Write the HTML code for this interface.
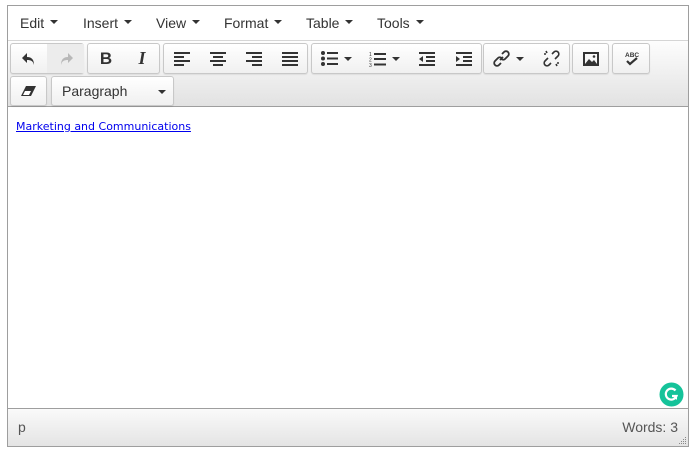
<!DOCTYPE html>
<html><head><style>
*{box-sizing:border-box;margin:0;padding:0}
body{width:695px;height:453px;background:#fff;font-family:"Liberation Sans",Arial,sans-serif;position:relative;overflow:hidden}
.ed{position:absolute;left:7px;top:5px;width:682px;height:442px;border:1px solid #9e9e9e;background:#fff}
.menu{position:absolute;left:0;top:0;width:680px;height:35px;background:#fff;border-bottom:1px solid #d5d5d5}
.mi{position:absolute;top:9px;font-size:14px;color:#333}
.mi:after{content:"";display:inline-block;margin-left:6px;vertical-align:middle;border-left:4px solid transparent;border-right:4px solid transparent;border-top:4px solid #333;position:relative;top:-2px}
.tb{position:absolute;left:0;top:35px;width:680px;height:66px;background:linear-gradient(#fdfdfd,#e2e2e2);border-bottom:1px solid #9e9e9e}
.g{position:absolute;border:1px solid #c8c8c8;border-radius:3px;background:linear-gradient(#fff,#f0f0f0);box-shadow:0 1px 1px rgba(0,0,0,.08)}
.b{position:absolute;top:0;height:100%;display:flex;align-items:center;justify-content:center}
.b+.b{}
.dd{display:inline-block;border-left:4px solid transparent;border-right:4px solid transparent;border-top:4px solid #333;margin-left:6px}
.body{position:absolute;left:0;top:102px;width:680px;height:300px}
.body a{position:absolute;left:8px;top:12px;font-family:"DejaVu Sans",sans-serif;font-size:11px;color:#1a0dab;color:#00e;text-decoration:underline}
.sb{position:absolute;left:0;top:402px;width:680px;height:38px;border-top:1px solid #9e9e9e;background:linear-gradient(#fafafa,#e4e4e4);font-size:14px;color:#555}
</style></head><body>
<div class="ed">
 <div class="menu">
  <span class="mi" style="left:12px">Edit</span>
  <span class="mi" style="left:75px">Insert</span>
  <span class="mi" style="left:148px">View</span>
  <span class="mi" style="left:216px">Format</span>
  <span class="mi" style="left:298px">Table</span>
  <span class="mi" style="left:369px">Tools</span>
 </div>
 <div class="tb">
  <!-- group1 -->
  <div class="g" style="left:2px;top:2px;width:74px;height:31px">
   <div class="b" style="left:0;width:36px"><svg width="16" height="16" viewBox="0 0 16 16"><path d="M6 2L1 7l5 5V9c4 0 6 1 7 5 0-5-2-8-7-8V2z" fill="#333"/></svg></div>
   <div class="b" style="left:36px;width:37px;background:#ececec"><svg width="16" height="16" viewBox="0 0 16 16"><path d="M10 2l5 5-5 5V9c-4 0-6 1-7 5 0-5 2-8 7-8V2z" fill="#b8b8b8"/></svg></div>
  </div>
  <div class="g" style="left:79px;top:2px;width:73px;height:31px">
   <div class="b" style="left:0;width:36px;font-weight:bold;font-size:17px;color:#333">B</div>
   <div class="b" style="left:36px;width:36px;font-family:'Liberation Serif',serif;font-style:italic;font-weight:bold;font-size:18px;color:#333">I</div>
  </div>
  <div class="g" style="left:155px;top:2px;width:145px;height:31px">
   <div class="b" style="left:0;width:36px"><svg width="16" height="14"><path d="M0 1h16M0 5h10M0 9h16M0 13h10" stroke="#333" stroke-width="2"/></svg></div>
   <div class="b" style="left:36px;width:36px"><svg width="16" height="14"><path d="M0 1h16M3 5h10M0 9h16M3 13h10" stroke="#333" stroke-width="2"/></svg></div>
   <div class="b" style="left:72px;width:36px"><svg width="16" height="14"><path d="M0 1h16M6 5h10M0 9h16M6 13h10" stroke="#333" stroke-width="2"/></svg></div>
   <div class="b" style="left:108px;width:36px"><svg width="16" height="14"><path d="M0 1h16M0 5h16M0 9h16M0 13h16" stroke="#333" stroke-width="2"/></svg></div>
  </div>
  <div class="g" style="left:303px;top:2px;width:171px;height:31px">
   <div class="b" style="left:0;width:48px"><svg width="17" height="15"><circle cx="2" cy="2" r="2" fill="#333"/><circle cx="2" cy="7.5" r="2" fill="#333"/><circle cx="2" cy="13" r="2" fill="#333"/><path d="M6 2h11M6 7.5h11M6 13h11" stroke="#333" stroke-width="2"/></svg><span class="dd"></span></div>
   <div class="b" style="left:48px;width:48px"><svg width="17" height="16"><text x="0" y="5" font-size="5" fill="#333" font-family="Liberation Sans">1</text><text x="0" y="10.5" font-size="5" fill="#333" font-family="Liberation Sans">2</text><text x="0" y="16" font-size="5" fill="#333" font-family="Liberation Sans">3</text><path d="M5 3h12M5 8h12M5 13.5h12" stroke="#333" stroke-width="2"/></svg><span class="dd"></span></div>
   <div class="b" style="left:96px;width:37px"><svg width="16" height="14"><path d="M0 1h16M7 5h9M7 9h9M0 13h16" stroke="#333" stroke-width="2"/><path d="M0 7l4-3v6z" fill="#333"/></svg></div>
   <div class="b" style="left:133px;width:37px"><svg width="16" height="14"><path d="M0 1h16M7 5h9M7 9h9M0 13h16" stroke="#333" stroke-width="2"/><path d="M4 7L0 4v6z" fill="#333"/></svg></div>
  </div>
  <div class="g" style="left:475px;top:2px;width:87px;height:31px">
   <div class="b" style="left:0;width:48px"><svg width="17" height="17" viewBox="0 0 17 17"><path d="M7 10l3-3M9 4l2-2a2.5 2.5 0 014 4l-3 3a2.5 2.5 0 01-3.5 0M8 13l-2 2a2.5 2.5 0 01-4-4l3-3a2.5 2.5 0 013.5 0" stroke="#333" stroke-width="1.8" fill="none"/></svg><span class="dd"></span></div>
   <div class="b" style="left:48px;width:38px"><svg width="17" height="17" viewBox="0 0 17 17"><path d="M9 4l2-2a2.5 2.5 0 014 4l-3 3M8 13l-2 2a2.5 2.5 0 01-4-4l3-3M3 1l1 2M1 4h2M14 16l-1-2M16 13h-2" stroke="#333" stroke-width="1.6" fill="none"/></svg></div>
  </div>
  <div class="g" style="left:564px;top:2px;width:37px;height:31px">
   <div class="b" style="left:0;width:36px"><svg width="16" height="14"><rect x="1" y="1" width="14" height="12" fill="none" stroke="#333" stroke-width="2"/><path d="M2 12l4-5 3 3 2-2 3 4z" fill="#333"/><circle cx="11" cy="4.5" r="1.3" fill="#333"/></svg></div>
  </div>
  <div class="g" style="left:604px;top:2px;width:38px;height:31px">
   <div class="b" style="left:0;width:37px"><svg width="16" height="16"><text x="1" y="6" font-size="6.5" font-weight="bold" fill="#333" font-family="Liberation Sans">ABC</text><path d="M3 10l3 3 7-6" stroke="#333" stroke-width="2.2" fill="none"/></svg></div>
  </div>
  <!-- row2 -->
  <div class="g" style="left:2px;top:35px;width:37px;height:30px">
   <div class="b" style="left:0;width:36px"><svg width="16" height="12"><path d="M5 1h10L10 11H0z" fill="#333"/><path d="M4 6h6l-2 4H2z" fill="#fff"/></svg></div>
  </div>
  <div class="g" style="left:43px;top:35px;width:123px;height:30px">
   <div class="b" style="left:10px;width:100px;justify-content:flex-start;font-size:14px;color:#333">Paragraph</div>
   <span class="dd" style="position:absolute;left:100px;top:13px"></span>
  </div>
 </div>
 <div class="body"><a>Marketing and Communications</a>
  <svg style="position:absolute;left:651px;top:274px" width="25" height="25"><circle cx="12.5" cy="12.5" r="12" fill="#15c39a"/><path d="M16.5 8.5A5.5 5.5 0 1 0 17.5 14H13" stroke="#fff" stroke-width="2.2" fill="none"/><path d="M15 15l3 3v-3z" fill="#fff"/></svg>
 </div>
 <div class="sb">
  <span style="position:absolute;left:10px;top:10px">p</span>
  <span style="position:absolute;right:10px;top:10px">Words: 3</span>
  <svg style="position:absolute;right:1px;bottom:1px" width="8" height="8"><g fill="#888"><rect x="6" y="0" width="1" height="1"/><rect x="4" y="2" width="1" height="1"/><rect x="6" y="2" width="1" height="1"/><rect x="2" y="4" width="1" height="1"/><rect x="4" y="4" width="1" height="1"/><rect x="6" y="4" width="1" height="1"/><rect x="0" y="6" width="1" height="1"/><rect x="2" y="6" width="1" height="1"/><rect x="4" y="6" width="1" height="1"/><rect x="6" y="6" width="1" height="1"/></g></svg>
 </div>
</div>
</body></html>
